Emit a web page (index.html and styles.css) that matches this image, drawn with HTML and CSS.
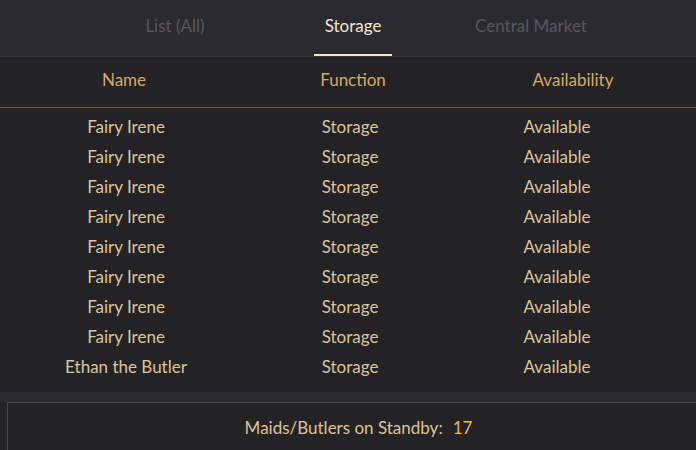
FILE: index.html
```html
<!DOCTYPE html>
<html>
<head>
<meta charset="utf-8">
<link rel="stylesheet" href="styles.css">
</head>
<body>
<div class="app">
  <nav class="tabs">
    <div class="tab">List (All)</div>
    <div class="tab active"><span>Storage</span></div>
    <div class="tab">Central Market</div>
  </nav>
  <div class="head">
    <div>Name</div>
    <div>Function</div>
    <div>Availability</div>
  </div>
  <div class="rows">
    <div class="row"><div>Fairy Irene</div><div>Storage</div><div>Available</div></div>
    <div class="row"><div>Fairy Irene</div><div>Storage</div><div>Available</div></div>
    <div class="row"><div>Fairy Irene</div><div>Storage</div><div>Available</div></div>
    <div class="row"><div>Fairy Irene</div><div>Storage</div><div>Available</div></div>
    <div class="row"><div>Fairy Irene</div><div>Storage</div><div>Available</div></div>
    <div class="row"><div>Fairy Irene</div><div>Storage</div><div>Available</div></div>
    <div class="row"><div>Fairy Irene</div><div>Storage</div><div>Available</div></div>
    <div class="row"><div>Fairy Irene</div><div>Storage</div><div>Available</div></div>
    <div class="row"><div>Ethan the Butler</div><div>Storage</div><div>Available</div></div>
  </div>
  <div class="band"></div>
  <div class="footer">
    <span class="label">Maids/Butlers on Standby:</span><span class="count">17</span>
  </div>
</div>
</body>
</html>
```
FILE: styles.css
```css
html, body {
  margin: 0;
  padding: 0;
  background: #232326;
}
body {
  font-family: "Lato", "Open Sans", sans-serif;
  font-size: 17px;
  width: 696px;
  height: 450px;
  overflow: hidden;
}
.app {
  display: flex;
  flex-direction: column;
  height: 450px;
}
.tabs {
  background: #2b2a30;
  border-bottom: 1px solid #3a393e;
  display: grid;
  grid-template-columns: 178px 178px 178px;
  padding-left: 86px;
  box-sizing: border-box;
  height: 57px;
}
.tab {
  display: flex;
  align-items: center;
  justify-content: center;
  color: #58575c;
  padding-bottom: 6px;
}
.tab.active {
  color: #f2e6d2;
  padding-bottom: 0;
  align-items: stretch;
}
.tab.active span {
  display: flex;
  align-items: center;
  padding: 0 11px 4px;
  border-bottom: 2px solid #f5e4c6;
}
.head {
  display: grid;
  grid-template-columns: 248px 210px 230px;
  align-items: center;
  color: #d6a969;
  border-bottom: 1px solid #6d5a3b;
  text-align: center;
  padding-bottom: 5px;
  box-sizing: border-box;
  height: 51px;
}
.rows {
  padding-top: 3px;
  height: 284px;
  box-sizing: border-box;
}
.row {
  display: grid;
  grid-template-columns: 252px 196px 218px;
  height: 30px;
  align-items: center;
  text-align: center;
  color: #dcc39c;
}
.band {
  height: 10px;
  background: #2a2a30;
}
.footer {
  margin-left: 7px;
  flex: 1;
  background: #232326;
  border-top: 1px solid #4d4840;
  border-left: 1px solid #4d4840;
  display: flex;
  justify-content: center;
  align-items: center;
  padding-top: 1px;
  padding-left: 13px;
}
.label {
  color: #dcc39c;
}
.count {
  color: #e9b94a;
  margin-left: 10px;
}
```
